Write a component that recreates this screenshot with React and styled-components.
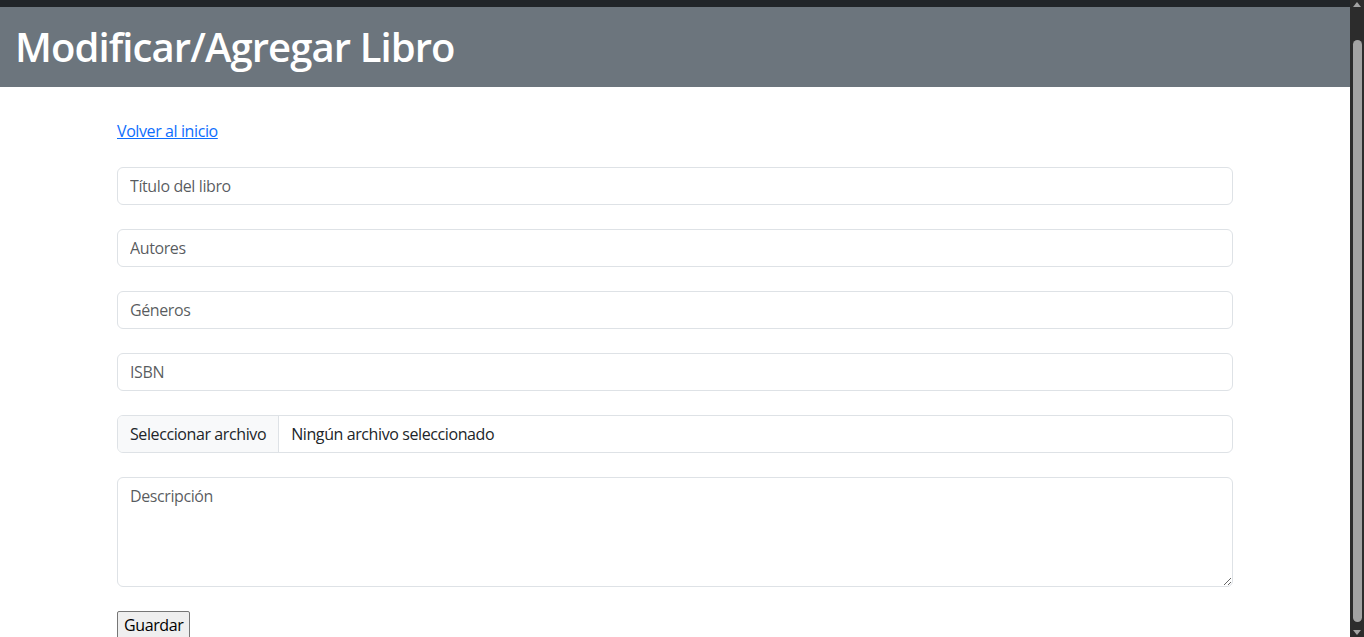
import React from 'react';
import styled, { createGlobalStyle } from 'styled-components';

const GlobalStyle = createGlobalStyle`
  body {
    margin: 0;
    font-family: 'Open Sans', 'Noto Sans', sans-serif;
    font-size: 16px;
    line-height: 1.5;
    letter-spacing: -0.4px;
    color: #212529;
    background: #ffffff;
  }
  * {
    box-sizing: border-box;
  }
`;

// room on the right for the drawn scrollbar
const Page = styled.div`
  min-height: 637px;
  padding-right: 14px;
  border-top: 7px solid #212529;
`;

const Header = styled.header`
  background: #6c757d;
  padding: 16px 16px 16px 15px;
`;

const Title = styled.h1`
  margin: 0;
  color: #ffffff;
  font-size: 40px;
  font-weight: 600;
  line-height: 48px;
  letter-spacing: -0.9px;
`;

const Container = styled.main`
  max-width: 1140px;
  margin: 0 auto;
  padding: 32px 12px 0;
`;

const BackLink = styled.a`
  display: inline-block;
  color: #0d6efd;
  text-decoration: underline;
  margin-bottom: 24px;
`;

const Form = styled.form`
  display: flex;
  flex-direction: column;
  gap: 24px;
  align-items: flex-start;
`;

const Field = styled.input`
  width: 100%;
  height: 38px;
  padding: 6px 12px;
  font: inherit;
  letter-spacing: inherit;
  color: #212529;
  border: 1px solid #dee2e6;
  border-radius: 6px;
  outline: none;
  &::placeholder {
    color: rgba(33, 37, 41, 0.75);
  }
`;

const FileBox = styled.label`
  width: 100%;
  height: 38px;
  display: flex;
  align-items: center;
  border: 1px solid #dee2e6;
  border-radius: 6px;
  overflow: hidden;
  cursor: pointer;
`;

const FileButton = styled.span`
  height: 100%;
  display: flex;
  align-items: center;
  padding: 0 12px;
  background: #f8f9fa;
  border-right: 1px solid #dee2e6;
`;

const FileName = styled.span`
  padding: 0 12px;
`;

const Area = styled.textarea`
  width: 100%;
  height: 110px;
  padding: 6px 12px;
  font: inherit;
  letter-spacing: inherit;
  color: #212529;
  border: 1px solid #dee2e6;
  border-radius: 6px;
  outline: none;
  &::placeholder {
    color: rgba(33, 37, 41, 0.75);
  }
`;

const SaveButton = styled.button`
  font: inherit;
  letter-spacing: inherit;
  line-height: 24px;
  padding: 1px 6px;
  color: #000000;
  background: #efefef;
  border: 1px solid #767676;
  border-radius: 2px;
`;

const ScrollTrack = styled.svg`
  position: fixed;
  top: 0;
  right: 0;
  width: 14px;
  height: 637px;
  background: #2c2c2c;
`;

function Scrollbar() {
  return (
    <ScrollTrack viewBox="0 0 14 637">
      <path d="M3 7 L7 2 L11 7 Z" fill="#a3a3a3" />
      <rect x="3" y="40" width="9" height="582" rx="4.5" fill="#a3a3a3" />
      <path d="M3 630 L11 630 L7 635 Z" fill="#a3a3a3" />
    </ScrollTrack>
  );
}

export default function App() {
  return (
    <Page>
      <GlobalStyle />
      <Header>
        <Title>Modificar/Agregar Libro</Title>
      </Header>
      <Container>
        <BackLink href="#">Volver al inicio</BackLink>
        <Form onSubmit={(e) => e.preventDefault()}>
          <Field type="text" placeholder="Título del libro" />
          <Field type="text" placeholder="Autores" />
          <Field type="text" placeholder="Géneros" />
          <Field type="text" placeholder="ISBN" />
          <FileBox>
            <FileButton>Seleccionar archivo</FileButton>
            <FileName>Ningún archivo seleccionado</FileName>
          </FileBox>
          <Area placeholder="Descripción" />
          <SaveButton type="submit">Guardar</SaveButton>
        </Form>
      </Container>
      <Scrollbar />
    </Page>
  );
}
